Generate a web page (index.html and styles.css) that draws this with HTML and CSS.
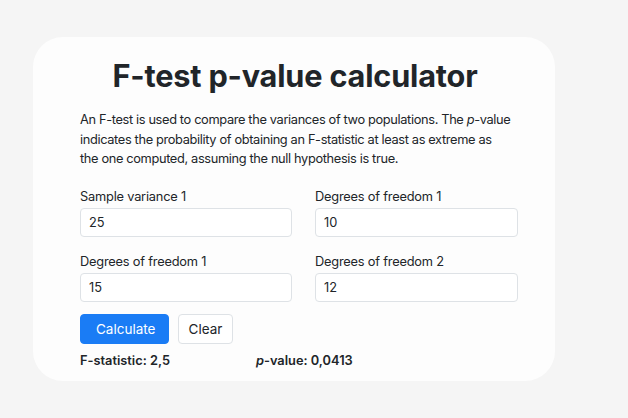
FILE: index.html
```html
<!DOCTYPE html>
<html lang="en">
<head>
<meta charset="utf-8">
<title>F-test p-value calculator</title>
<link rel="stylesheet" href="styles.css">
</head>
<body>
<main class="card">
  <h1 class="title">F-test p-value calculator</h1>
  <p class="intro">An F-test is used to compare the variances of two populations. The <span class="nowrap"><i>p</i>-value</span><br>indicates the probability of obtaining an F-statistic at least as extreme as<br>the one computed, assuming the null hypothesis is true.</p>
  <div class="fields">
    <label class="field"><span class="label">Sample variance 1</span><input class="input" type="text" value="25"></label>
    <label class="field"><span class="label">Degrees of freedom 1</span><input class="input" type="text" value="10"></label>
    <label class="field"><span class="label">Degrees of freedom 1</span><input class="input" type="text" value="15"></label>
    <label class="field"><span class="label">Degrees of freedom 2</span><input class="input" type="text" value="12"></label>
  </div>
  <div class="actions">
    <button class="btn btn-primary" type="button">Calculate</button>
    <button class="btn btn-light" type="button">Clear</button>
  </div>
  <div class="results">
    <span class="result">F-statistic: 2,5</span>
    <span class="result"><i>p</i>-value: 0,0413</span>
  </div>
</main>
</body>
</html>
```

FILE: styles.css
```css
html, body {
  margin: 0;
  padding: 0;
  background: #f5f5f5;
}
body {
  font-family: Inter, "Noto Sans", "Liberation Sans", sans-serif;
  color: #212529;
  padding: 37px 0 0 33px;
}
.card {
  box-sizing: border-box;
  width: 522px;
  height: 344px;
  background: #fdfdfd;
  border-radius: 30px;
  padding: 21px 37px 0 47px;
}
.title {
  margin: 0;
  padding-right: 8px;
  text-align: center;
  font-size: 30.7px;
  line-height: 36px;
  font-weight: 700;
  letter-spacing: -0.2px;
}
.intro {
  margin: 16px -10px 0 0;
  font-size: 12.8px;
  line-height: 19.5px;
  letter-spacing: -0.35px;
}
.nowrap {
  white-space: nowrap;
}
.fields {
  display: grid;
  grid-template-columns: 212px 203px;
  column-gap: 23px;
  row-gap: 16px;
  margin-top: 19px;
}
.field {
  display: flex;
  flex-direction: column;
  gap: 3px;
}
.label {
  font-size: 12.8px;
  line-height: 17px;
  letter-spacing: -0.2px;
}
.input {
  box-sizing: border-box;
  height: 29px;
  width: 100%;
  border: 1px solid #dee2e6;
  border-radius: 4px;
  padding: 0 8px;
  font: inherit;
  font-size: 12.8px;
  color: #212529;
  background: #fff;
}
.actions {
  display: flex;
  gap: 9px;
  margin-top: 12px;
}
.btn {
  box-sizing: border-box;
  height: 30px;
  border-radius: 4px;
  font: inherit;
  font-size: 13.5px;
  padding: 0 15px;
}
.btn-primary {
  width: 89px;
  background: #1a7cf5;
  border: 1px solid #1a7cf5;
  color: #fff;
}
.btn-light {
  width: 55px;
  background: #fff;
  border: 1px solid #dee2e6;
  color: #212529;
  padding: 0;
}
.results {
  display: grid;
  grid-template-columns: 176px auto;
  margin-top: 8px;
}
.result {
  font-size: 12.8px;
  line-height: 17px;
  font-weight: 600;
}
```
